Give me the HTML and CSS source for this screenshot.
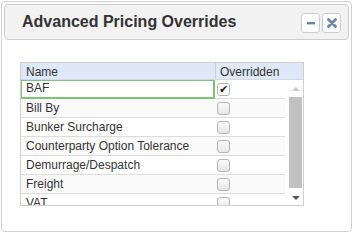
FILE: index.html
```html
<!doctype html>
<html lang="en">
<head>
  <meta charset="utf-8">
  <title>Advanced Pricing Overrides</title>
  <link rel="stylesheet" href="styles.css">
</head>
<body>
  <div class="panel">
    <div class="panel-head">
      <h1 class="title">Advanced Pricing Overrides</h1>
      <div class="tools">
        <button class="tool" title="Minimize">
          <svg width="10" height="10" viewBox="0 0 10 10"><rect x="1" y="4" width="8" height="2.4" fill="#6d85ad"/></svg>
        </button>
        <button class="tool" title="Close">
          <svg width="10" height="10" viewBox="0 0 10 10"><path d="M1.5 1.5 L8.5 8.5 M8.5 1.5 L1.5 8.5" stroke="#6d85ad" stroke-width="2.8" stroke-linecap="round"/></svg>
        </button>
      </div>
    </div>

    <div class="grid">
      <div class="grid-head">
        <div class="col-name">Name</div>
        <div class="col-flag">Overridden</div>
      </div>
      <div class="grid-body">
        <div class="rows">
          <div class="row"><div class="col-name cell-focus">BAF</div><div class="col-flag"><span class="chk on">&#10004;</span></div></div>
          <div class="row alt"><div class="col-name">Bill By</div><div class="col-flag"><span class="chk"></span></div></div>
          <div class="row"><div class="col-name">Bunker Surcharge</div><div class="col-flag"><span class="chk"></span></div></div>
          <div class="row alt"><div class="col-name">Counterparty Option Tolerance</div><div class="col-flag"><span class="chk"></span></div></div>
          <div class="row"><div class="col-name">Demurrage/Despatch</div><div class="col-flag"><span class="chk"></span></div></div>
          <div class="row alt"><div class="col-name">Freight</div><div class="col-flag"><span class="chk"></span></div></div>
          <div class="row"><div class="col-name">VAT</div><div class="col-flag"><span class="chk"></span></div></div>
        </div>
        <div class="scrollbar">
          <div class="arrow up"></div>
          <div class="thumb"></div>
          <div class="arrow down"></div>
        </div>
      </div>
    </div>
  </div>
</body>
</html>
```

FILE: styles.css
```css
*{box-sizing:border-box}
html,body{margin:0;background:#fff;font-family:"Liberation Sans",Arial,sans-serif;color:#333}

.panel{margin:1px;width:351px;height:231px;border:1px solid #cfcfcf;border-radius:4px;padding:2px}
.panel-head{height:36px;border:1px solid #cdcdcd;border-radius:4px;background:#f2f2f2;display:flex;align-items:center;justify-content:space-between;padding:0 7px 0 17px}
.title{margin:0;font-size:16px;font-weight:700;color:#333}
.tools{display:flex;gap:2px;margin-top:1px}
.tool{width:19px;height:20px;padding:0;border:1px solid #ccc;border-radius:3px;background:#fff;display:flex;align-items:center;justify-content:center}

.grid{margin:22px 0 0 16px;width:284px;border:1px solid #cfcfcf;font-size:12px}
.grid-head{display:flex;height:17px;background:#dfe8f6;color:#333;border-bottom:1px solid #cfd9e7}
.grid-head .col-name{width:195px;padding:2px 0 0 5px;border-right:1px solid #c5d1e3}
.grid-head .col-flag{flex:1;padding:2px 0 0 4px}

.grid-body{display:flex;height:125px;overflow:hidden}
.rows{width:267px}
.row{display:flex;height:19px;border-bottom:1px solid #dcdcdc;background:#fff}
.row.alt{background:#fafafa}
.row .col-name{width:194px;padding:3px 0 0 5px;line-height:13px;white-space:nowrap}
.row .col-flag{flex:1;padding:3px 0 0 2px}
.cell-focus{border:2px solid #7cc576;padding:1px 0 0 4px!important;margin:-1px 0 0 -1px;width:195px!important;height:20px}

.chk{display:block;width:13px;height:13px;border:1px solid #b5b5b5;border-radius:3px;background:linear-gradient(#fafafa,#e6e6e6);font-size:11px;line-height:11px;text-align:center;color:#222}
.chk.on{background:#fff}

.scrollbar{width:15px;margin-left:3px;display:flex;flex-direction:column;background:#fff}
.arrow{height:17px;position:relative}
.arrow.up:after,.arrow.down:after{content:"";position:absolute;left:4px;border-left:4px solid transparent;border-right:4px solid transparent}
.arrow.up:after{top:7px;border-bottom:4px solid #c8c8c8}
.arrow.down:after{top:8px;border-top:4px solid #555}
.thumb{flex:1;background:#c1c1c1;margin:0 1px}
```
